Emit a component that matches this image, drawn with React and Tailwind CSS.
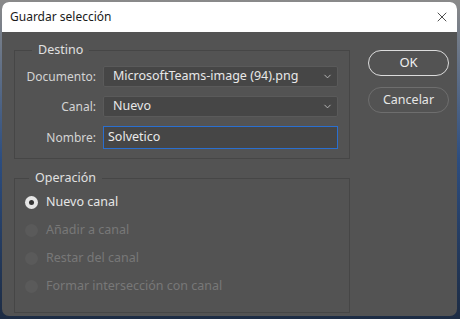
import { X, ChevronDown } from "lucide-react";

const font = { fontFamily: '"Noto Sans", "Open Sans", sans-serif' };

const Select = ({ value }) => (
  <div className="flex h-[21px] w-[235px] items-center justify-between rounded-[2px] border border-[#5a5a5a] bg-[#464646] pl-[9px] pr-[4px] text-[12.5px] text-[#e8e8e8]">
    <span className="leading-none">{value}</span>
    <ChevronDown size={11} strokeWidth={2} className="text-[#bdbdbd]" />
  </div>
);

const Row = ({ label, children }) => (
  <div className="flex h-[21px] items-center">
    <span className="w-[74px] text-right text-[12px] text-[#d4d4d4]">{label}</span>
    <div className="ml-[7px]">{children}</div>
  </div>
);

const Radio = ({ label, checked, disabled }) => (
  <div className="flex h-[28px] items-center">
    {checked ? (
      <div className="flex h-[13px] w-[13px] items-center justify-center rounded-full bg-[#e6e6e6]">
        <div className="h-[5px] w-[5px] rounded-full bg-[#333]" />
      </div>
    ) : (
      <div className="h-[13px] w-[13px] rounded-full bg-[#5a5a5a]" />
    )}
    <span
      className={`ml-[8px] text-[12.5px] ${disabled ? "text-[#787878]" : "text-[#e6e6e6]"}`}
    >
      {label}
    </span>
  </div>
);

export default function App() {
  return (
    <div
      className="h-[319px] w-[460px] overflow-hidden bg-gradient-to-b from-[#8a8a8a] via-[#2c4d80] to-[#1d2c44] pl-[2px] pt-[2px]"
      style={font}
    >
      <div className="flex h-[314px] w-[455px] flex-col overflow-hidden rounded-[7px] bg-[#535353]">
        {/* title bar */}
        <div className="flex h-[30px] items-center justify-between bg-white pl-[8px] pr-[7px]">
          <span className="text-[12px] text-[#1a1a1a]">Guardar selección</span>
          <X size={16} strokeWidth={1.2} className="text-[#222]" />
        </div>

        <div className="flex pl-[12px] pt-[11px]">
          <div className="flex w-[336px] flex-col">
            {/* Destino */}
            <fieldset className="h-[116px] border border-[#464646] pl-[7px]">
              <legend className="ml-[10px] px-[6px] text-[12.5px] leading-[14px] text-[#e0e0e0]">
                Destino
              </legend>
              <div className="mt-[9px] flex flex-col gap-[9px]">
                <Row label="Documento:">
                  <Select value="MicrosoftTeams-image (94).png" />
                </Row>
                <Row label="Canal:">
                  <Select value="Nuevo" />
                </Row>
                <div className="mt-[1px]">
                  <Row label="Nombre:">
                    <div className="flex h-[23px] w-[235px] items-center border border-[#2a6fd0] bg-[#464646] pl-[4px] text-[12.5px] text-[#eaeaea]">
                      Solvetico
                    </div>
                  </Row>
                </div>
              </div>
            </fieldset>

            {/* Operación */}
            <fieldset className="mt-[12px] h-[142px] border border-[#464646] pl-[10px]">
              <legend className="ml-[4px] px-[6px] text-[12.5px] leading-[14px] text-[#e0e0e0]">
                Operación
              </legend>
              <div className="mt-[3px] flex flex-col">
                <Radio label="Nuevo canal" checked />
                <Radio label="Añadir a canal" disabled />
                <Radio label="Restar del canal" disabled />
                <Radio label="Formar intersección con canal" disabled />
              </div>
            </fieldset>
          </div>

          <div className="ml-[18px] mt-[7px] flex flex-col gap-[11px]">
            <button className="h-[26px] w-[81px] rounded-full border-[1.5px] border-[#dcdcdc] text-[13px] text-[#f0f0f0]">
              OK
            </button>
            <button className="h-[26px] w-[81px] rounded-full border border-[#6e6e6e] text-[12.5px] text-[#e6e6e6]">
              Cancelar
            </button>
          </div>
        </div>
      </div>
    </div>
  );
}
